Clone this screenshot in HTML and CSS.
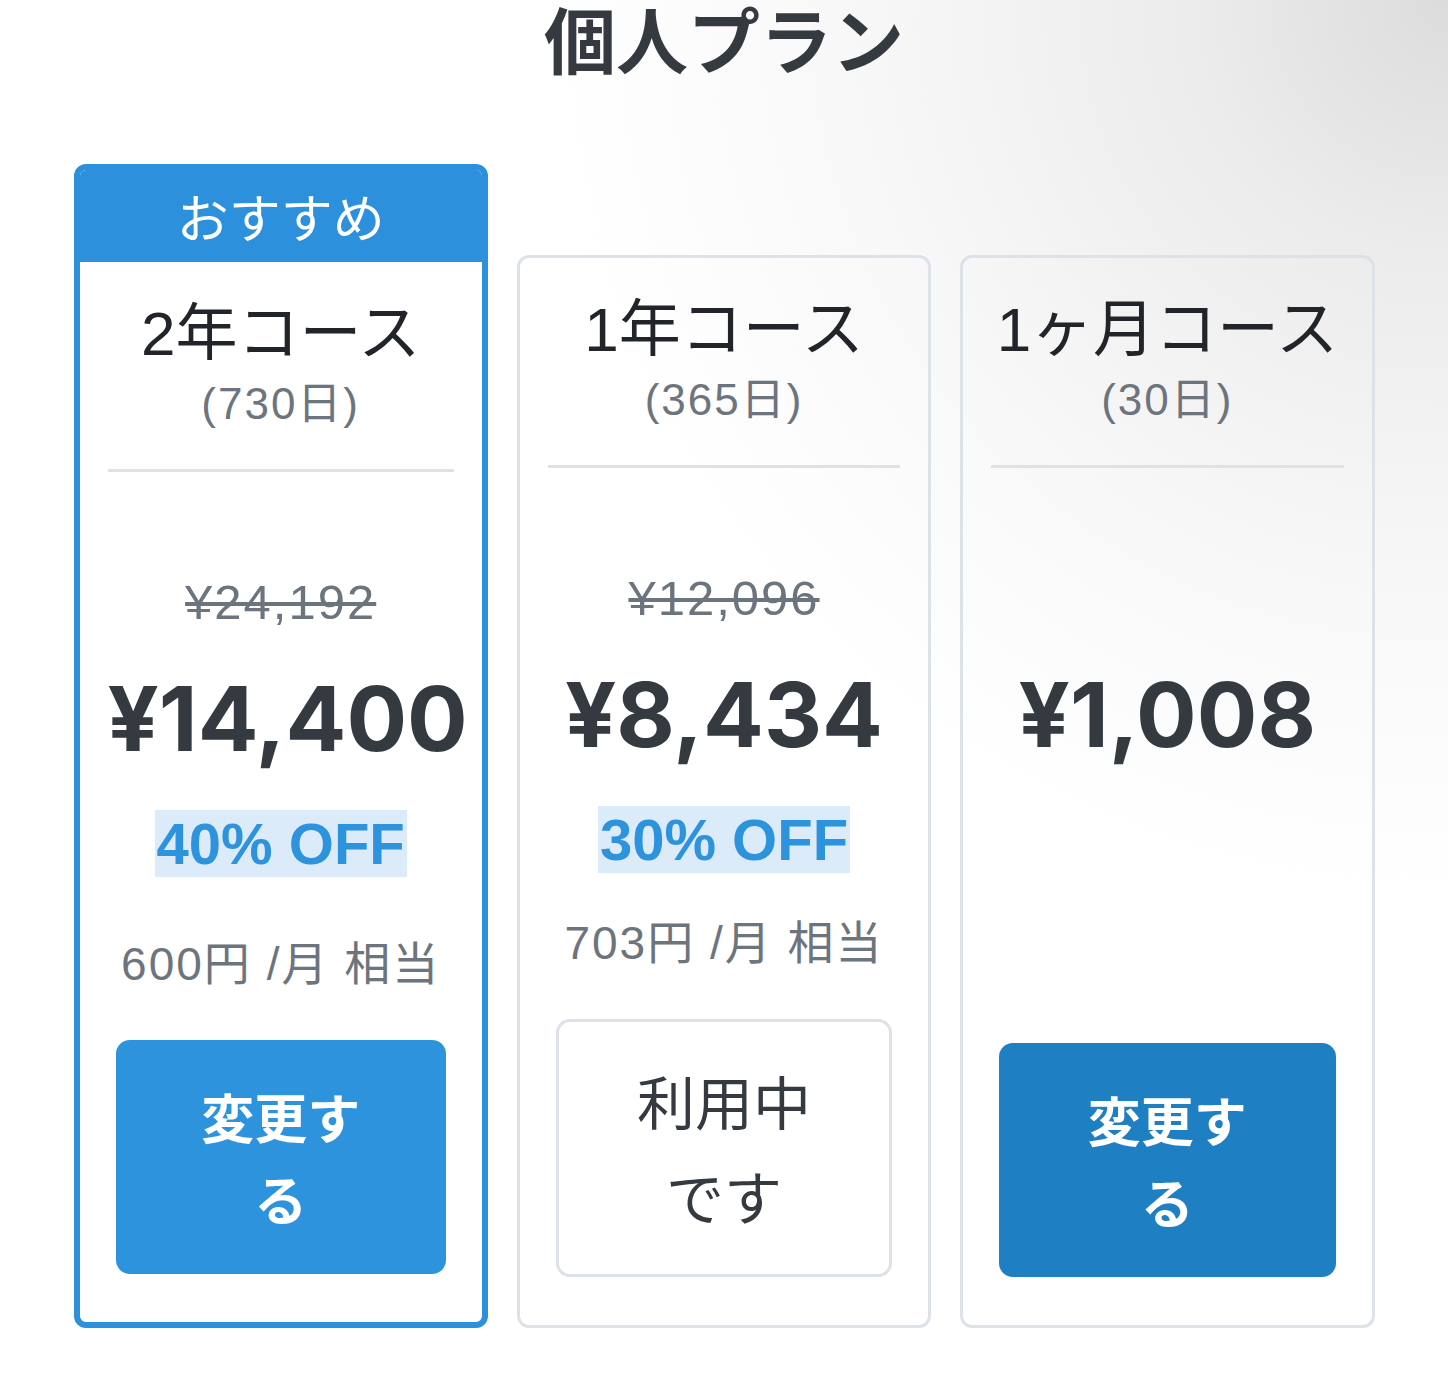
FILE: index.html
```html
<!DOCTYPE html>
<html lang="ja">
<head>
<meta charset="utf-8">
<title>個人プラン</title>
<link rel="stylesheet" href="styles.css">
</head>
<body>
<main class="page">
  <h1 class="page-title">個人プラン</h1>
  <div class="plans">
    <section class="plan plan--featured">
      <div class="plan-badge">おすすめ</div>
      <div class="plan-body">
        <h2 class="plan-name">2年コース</h2>
        <p class="plan-days">(730日)</p>
        <hr class="plan-divider">
        <p class="plan-regular"><s>¥24,192</s></p>
        <p class="plan-price">¥14,400</p>
        <p class="plan-discount"><span>40% OFF</span></p>
        <div class="plan-foot">
          <p class="plan-monthly">600円 /月 相当</p>
          <button class="plan-btn" type="button">変更する</button>
        </div>
      </div>
    </section>
    <section class="plan">
      <div class="plan-body">
        <h2 class="plan-name">1年コース</h2>
        <p class="plan-days">(365日)</p>
        <hr class="plan-divider">
        <p class="plan-regular"><s>¥12,096</s></p>
        <p class="plan-price">¥8,434</p>
        <p class="plan-discount"><span>30% OFF</span></p>
        <div class="plan-foot">
          <p class="plan-monthly">703円 /月 相当</p>
          <button class="plan-btn plan-btn--current" type="button">利用中です</button>
        </div>
      </div>
    </section>
    <section class="plan">
      <div class="plan-body">
        <h2 class="plan-name">1ヶ月コース</h2>
        <p class="plan-days">(30日)</p>
        <hr class="plan-divider">
        <p class="plan-regular plan-regular--empty">&nbsp;</p>
        <p class="plan-price">¥1,008</p>
        <div class="plan-foot">
          <button class="plan-btn plan-btn--active" type="button">変更する</button>
        </div>
      </div>
    </section>
  </div>
</main>
</body>
</html>
```
FILE: styles.css
```css
html, body {
  margin: 0;
  padding: 0;
}

body {
  min-height: 1383px;
  font-family: "Liberation Sans", "Noto Sans CJK JP", sans-serif;
  color: #212529;
  background:
    radial-gradient(circle at 100% 0, #dcdcdc 0, #ececec 260px, #f8f8f8 600px, #ffffff 900px);
}

.page {
  width: 1301px;
  margin: 0 auto;
}

.page-title {
  margin: 0;
  font-family: "Noto Sans CJK JP", sans-serif;
  font-size: 72px;
  line-height: 74px;
  font-weight: 700;
  text-align: center;
  color: #343a40;
}

.plans {
  display: grid;
  grid-template-columns: repeat(3, minmax(0, 1fr));
  column-gap: 29px;
  margin-top: 90px;
  min-height: 1164px;
}

.plan {
  display: flex;
  flex-direction: column;
  min-width: 0;
  margin-top: 91px;
  border: 3px solid #dde2e8;
  border-radius: 12px;
}

.plan--featured {
  margin-top: 0;
  border: 6px solid #2d90dc;
  background: #ffffff;
}

.plan-badge {
  height: 92px;
  line-height: 92px;
  border-radius: 6px 6px 0 0;
  background: #2d90dc;
  color: #ffffff;
  font-family: "Noto Sans CJK JP", sans-serif;
  font-size: 52px;
  text-align: center;
}

.plan-body {
  flex: 1;
  display: flex;
  flex-direction: column;
  padding: 30px 28px 48px;
  text-align: center;
}

.plan-name {
  margin: 0;
  font-size: 62px;
  line-height: 84px;
  font-weight: 400;
  color: #212529;
}

.plan-days {
  margin: 0;
  font-size: 44px;
  line-height: 56px;
  letter-spacing: 2px;
  color: #6c757d;
}

.plan-divider {
  margin: 37px 0 0;
  height: 3px;
  border: 0;
  background: #dee2e6;
}

.plan-regular {
  margin: 100px 0 0;
  font-size: 49px;
  line-height: 60px;
  letter-spacing: 2px;
  color: #6c757d;
}

.plan-regular--empty {
  visibility: hidden;
}

.plan-price {
  margin: 37px 0 0;
  font-family: "Inter", "Liberation Sans", sans-serif;
  font-size: 90px;
  line-height: 100px;
  font-weight: 700;
  color: #343a40;
  white-space: nowrap;
}

.plan-discount {
  margin: 41px 0 0;
}

.plan-discount span {
  display: inline-block;
  padding: 0 2px;
  font-size: 58px;
  line-height: 67px;
  font-weight: 700;
  color: #2d93dd;
  background: #dcebf9;
}

.plan-foot {
  margin-top: auto;
  padding: 0 8px;
}

.plan-monthly {
  margin: 0;
  font-size: 46px;
  line-height: 60px;
  letter-spacing: 2px;
  color: #6c757d;
}

.plan-btn {
  display: block;
  width: 100%;
  margin-top: 46px;
  padding: 35px 70px;
  border: 0;
  border-radius: 14px;
  background: #2d93dd;
  color: #ffffff;
  font-family: "Noto Sans CJK JP", sans-serif;
  font-size: 53px;
  line-height: 82px;
  font-weight: 700;
  text-align: center;
}

.plan-btn--current {
  padding: 31px 70px;
  border: 3px solid #dde2e8;
  background: transparent;
  color: #343a40;
  font-size: 58px;
  line-height: 95px;
  font-weight: 400;
}

.plan-btn--active {
  background: #1e7fc2;
}
```
